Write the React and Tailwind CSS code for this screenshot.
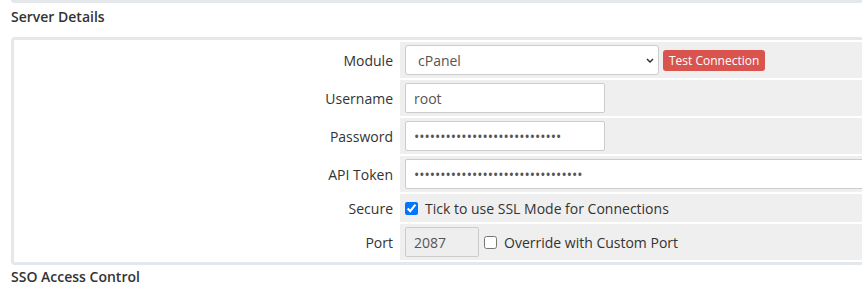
import React from 'react';

const Row = ({ label, children, tall = true }) => (
  <div className={`flex gap-[2px] ${tall ? 'h-[36px]' : 'h-[28px]'}`}>
    <div className="w-[382px] shrink-0 bg-white flex items-center justify-end pr-[5px]">
      {label}
    </div>
    <div className="flex-1 bg-[#efefef] flex items-center pl-[5px]">
      {children}
    </div>
  </div>
);

const inputCls =
  'h-[30px] border border-[#cccccc] rounded-[2px] pl-[8px] text-[14px] text-[#555] outline-none';

export default function App() {
  return (
    <div
      className="w-[862px] h-[285px] overflow-hidden bg-white text-[14px] text-[#333]"
      style={{ fontFamily: '"Open Sans", "Liberation Sans", sans-serif' }}
    >
      {/* bottom edge of previous box */}
      <div className="h-[3px] ml-[11px] w-[900px] bg-[#e5e8ea] rounded-bl-[4px]" />

      <h2 className="mt-[4px] ml-[11px] text-[14px] leading-[20px] font-semibold text-[#333]">
        Server Details
      </h2>

      <div className="mt-[10px] ml-[11px] w-[900px] border-[3px] border-[#e5e8ea] rounded-[4px] p-[2px] flex flex-col gap-[2px]">
        <Row label="Module">
          <div className="relative w-[254px] h-[30px] border border-[#cccccc] rounded-[3px] bg-white flex items-center pl-[12px] text-[#555]">
            cPanel
            <svg className="absolute right-[4px] top-[12px]" width="8" height="5" viewBox="0 0 8 5">
              <path d="M1 1 L4 4 L7 1" fill="none" stroke="#333" strokeWidth="1.5" />
            </svg>
          </div>
          <button className="ml-[4px] h-[21px] px-[6px] rounded-[3px] bg-[#d9534f] text-white text-[12px] leading-[21px]">
            Test Connection
          </button>
        </Row>
        <Row label="Username">
          <input className={`${inputCls} bg-white w-[200px]`} defaultValue="root" />
        </Row>
        <Row label="Password">
          <input
            type="password"
            className={`${inputCls} bg-white w-[200px]`}
            defaultValue="abcdefghijklmnopqrstuvwxyzab"
          />
        </Row>
        <Row label="API Token">
          <input
            type="password"
            className={`${inputCls} bg-white w-[600px]`}
            defaultValue="abcdefghijklmnopqrstuvwxyzabcdef"
          />
        </Row>
        <Row label="Secure" tall={false}>
          <label className="flex items-center gap-[7px]">
            <input type="checkbox" defaultChecked className="m-0 w-[13px] h-[13px] accent-[#0075ff]" />
            <span>Tick to use SSL Mode for Connections</span>
          </label>
        </Row>
        <Row label="Port">
          <input
            className={`${inputCls} w-[74px] bg-[#eeeeee]`}
            defaultValue="2087"
            disabled
          />
          <label className="ml-[5px] flex items-center gap-[7px]">
            <input type="checkbox" className="m-0 w-[13px] h-[13px]" />
            <span>Override with Custom Port</span>
          </label>
        </Row>
      </div>

      <h2 className="mt-[2px] ml-[11px] text-[14px] leading-[20px] font-semibold text-[#333]">
        SSO Access Control
      </h2>
    </div>
  );
}
